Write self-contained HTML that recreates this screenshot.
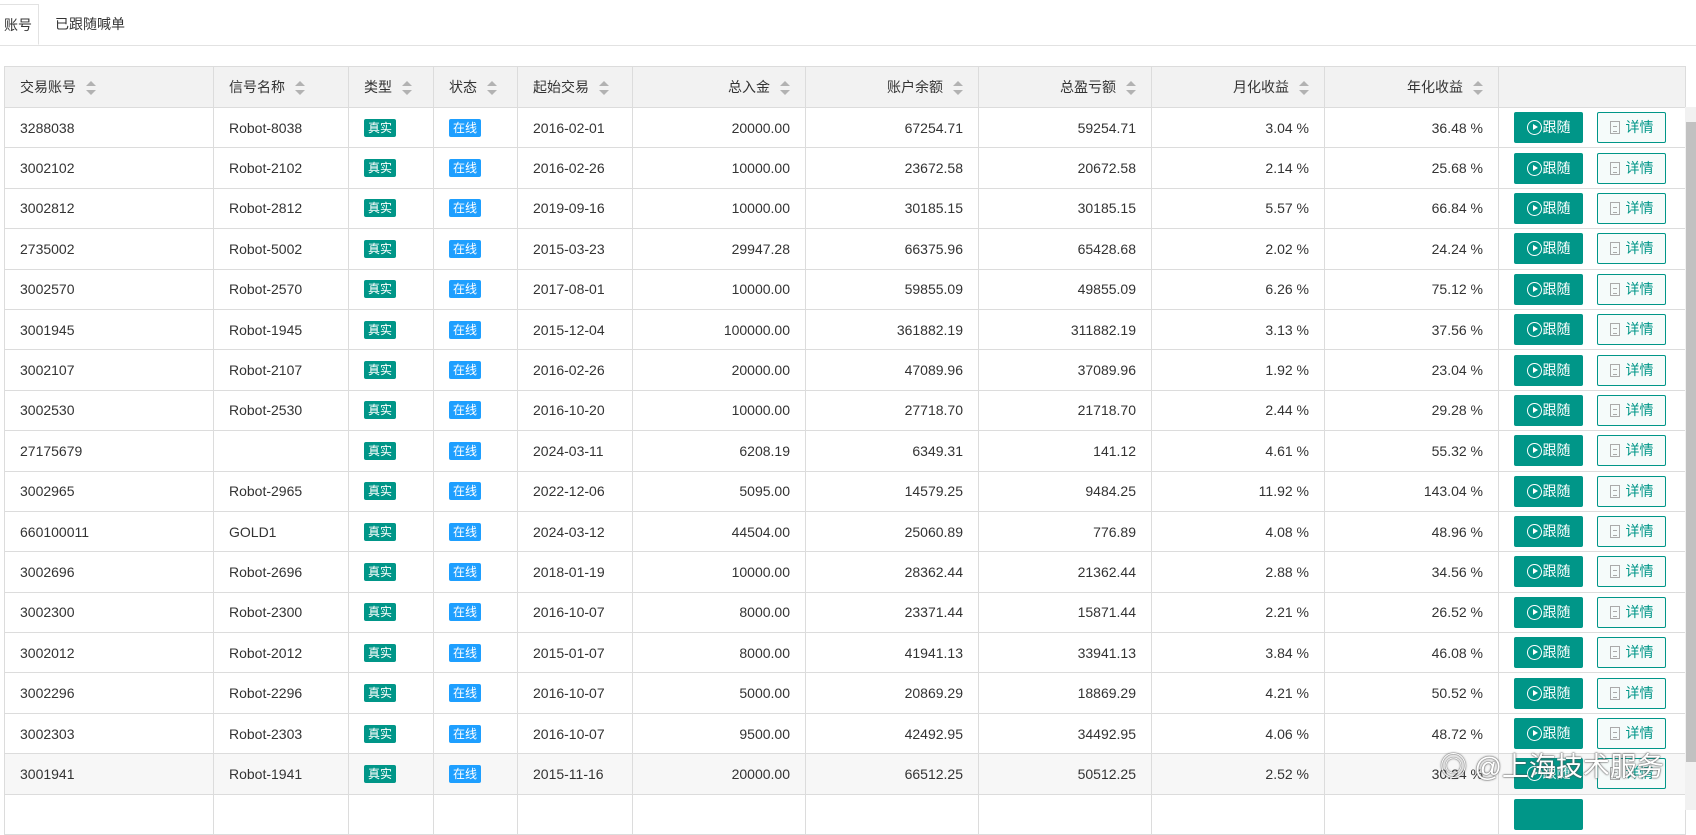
<!DOCTYPE html>
<html><head><meta charset="utf-8"><style>
body{margin:0;width:1696px;height:810px;overflow:hidden;background:#fff;font-family:"Liberation Sans","Noto Sans CJK SC",sans-serif;font-size:14px;color:#333;position:relative}
.tabs{position:absolute;left:0;top:0;width:1696px;height:45px;border-bottom:1px solid #e2e2e2}
.tab1{position:absolute;left:-20px;top:4px;width:59px;height:41px;border:1px solid #e2e2e2;border-bottom:1px solid #fff;background:#fff;line-height:40px;text-align:right;box-sizing:border-box;padding-right:6px}
.tab2{position:absolute;left:55px;top:4px;line-height:40px}
table{position:absolute;left:4px;top:66px;border-collapse:collapse;table-layout:fixed;width:1681px}
td,th{border:1px solid #dcdcdc;height:40.4px;padding:0 15px;white-space:nowrap;overflow:hidden;font-weight:normal;box-sizing:border-box}
th{background:#f2f2f2;text-align:left;height:41px}
.r{text-align:right}
.s{display:inline-block;vertical-align:middle;margin-left:10px;width:10px;height:14px;position:relative}
.s:before,.s:after{content:"";position:absolute;left:0;border-left:5px solid transparent;border-right:5px solid transparent}
.s:before{top:0;border-bottom:5px solid #b2b2b2}.s:after{bottom:0;border-top:5px solid #b2b2b2}
.b{display:inline-block;color:#fff;font-size:12px;padding:0 4px;line-height:18px;border-radius:2px}
.g{background:#009688}.bl{background:#1e9fff}
.f{display:inline-block;width:69px;height:31px;background:#009688;color:#fff;border-radius:2px;text-align:center;line-height:31px;vertical-align:middle}
.d{display:inline-block;width:67px;height:29px;border:1px solid #009688;background:#f5fbfa;color:#009688;border-radius:2px;text-align:center;line-height:29px;margin-left:14px;vertical-align:middle}
.pc{display:inline-block;width:13px;height:13px;border:1.5px solid #fff;border-radius:50%;vertical-align:-3px;position:relative;margin-right:1px}
.pc:after{content:"";position:absolute;left:5px;top:3px;border-left:5px solid #fff;border-top:3.5px solid transparent;border-bottom:3.5px solid transparent}
.cl{display:inline-block;width:10px;height:13px;border:1.5px solid #aaa;vertical-align:-2px;margin-right:6px;position:relative;box-sizing:border-box}
.cl:before{content:"";position:absolute;left:2px;right:2px;top:4px;height:4px;border-top:1px solid #aaa;border-bottom:1px solid #aaa}
tr.h td{background:#f7f7f7}
.sb{position:absolute;left:1685px;top:107px;width:11px;height:703px;background:#f1f1f1}
.th{position:absolute;left:1686px;top:122px;width:10px;height:640px;background:#c1c1c1}
.wm{position:absolute;left:1440px;top:745px;color:#fff;font-size:27px;text-shadow:0 0 2px #555,0 0 1px #333}
</style></head><body>
<div class="tabs"><div class="tab1">账号</div><div class="tab2">已跟随喊单</div></div>
<table>
<colgroup><col style="width:209px"><col style="width:135px"><col style="width:85px"><col style="width:84px"><col style="width:115px"><col style="width:173px"><col style="width:173px"><col style="width:173px"><col style="width:173px"><col style="width:174px"><col style="width:187px"></colgroup>
<tr><th>交易账号<i class="s"></i></th><th>信号名称<i class="s"></i></th><th>类型<i class="s"></i></th><th>状态<i class="s"></i></th><th>起始交易<i class="s"></i></th><th class="r">总入金<i class="s"></i></th><th class="r">账户余额<i class="s"></i></th><th class="r">总盈亏额<i class="s"></i></th><th class="r">月化收益<i class="s"></i></th><th class="r">年化收益<i class="s"></i></th><th></th></tr>
<tbody id="tb"></tbody>
</table>
<div class="sb"></div><div class="th"></div>
<div class="wm">◎ @上海技术服务</div>
<script>
var d=[["3288038","Robot-8038","2016-02-01","20000.00","67254.71","59254.71","3.04","36.48"],
["3002102","Robot-2102","2016-02-26","10000.00","23672.58","20672.58","2.14","25.68"],
["3002812","Robot-2812","2019-09-16","10000.00","30185.15","30185.15","5.57","66.84"],
["2735002","Robot-5002","2015-03-23","29947.28","66375.96","65428.68","2.02","24.24"],
["3002570","Robot-2570","2017-08-01","10000.00","59855.09","49855.09","6.26","75.12"],
["3001945","Robot-1945","2015-12-04","100000.00","361882.19","311882.19","3.13","37.56"],
["3002107","Robot-2107","2016-02-26","20000.00","47089.96","37089.96","1.92","23.04"],
["3002530","Robot-2530","2016-10-20","10000.00","27718.70","21718.70","2.44","29.28"],
["27175679","","2024-03-11","6208.19","6349.31","141.12","4.61","55.32"],
["3002965","Robot-2965","2022-12-06","5095.00","14579.25","9484.25","11.92","143.04"],
["660100011","GOLD1","2024-03-12","44504.00","25060.89","776.89","4.08","48.96"],
["3002696","Robot-2696","2018-01-19","10000.00","28362.44","21362.44","2.88","34.56"],
["3002300","Robot-2300","2016-10-07","8000.00","23371.44","15871.44","2.21","26.52"],
["3002012","Robot-2012","2015-01-07","8000.00","41941.13","33941.13","3.84","46.08"],
["3002296","Robot-2296","2016-10-07","5000.00","20869.29","18869.29","4.21","50.52"],
["3002303","Robot-2303","2016-10-07","9500.00","42492.95","34492.95","4.06","48.72"],
["3001941","Robot-1941","2015-11-16","20000.00","66512.25","50512.25","2.52","30.24"],
["","","","","","","",""]];
var h="";d.forEach(function(r,i){var e=i==17;h+='<tr'+(i==16?' class="h"':'')+'><td>'+r[0]+'</td><td>'+r[1]+'</td><td>'+(e?'':'<span class="b g">真实</span>')+'</td><td>'+(e?'':'<span class="b bl">在线</span>')+'</td><td>'+r[2]+'</td><td class="r">'+r[3]+'</td><td class="r">'+r[4]+'</td><td class="r">'+r[5]+'</td><td class="r">'+(e?'':r[6]+' %')+'</td><td class="r">'+(e?'':r[7]+' %')+'</td><td>'+(e?'<span class="f"></span>':'<span class="f"><i class="pc"></i>跟随</span><span class="d"><i class="cl"></i>详情</span>')+'</td></tr>'});
document.getElementById("tb").innerHTML=h;
</script>
</body></html>
